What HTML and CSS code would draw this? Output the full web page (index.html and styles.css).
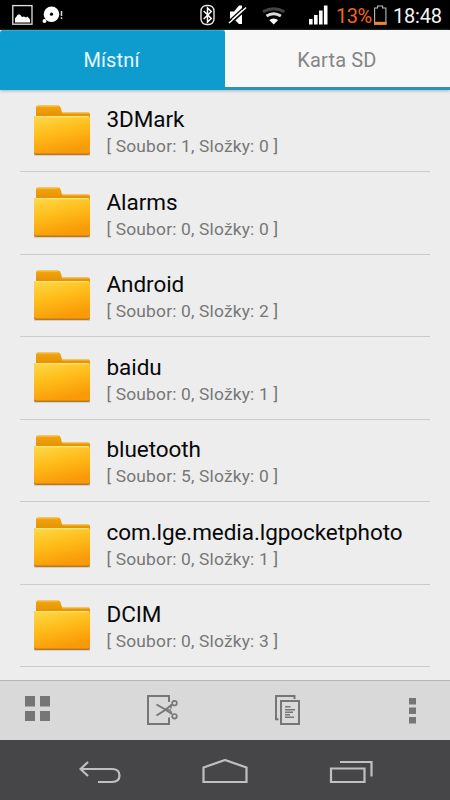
FILE: index.html
```
<!DOCTYPE html>
<html lang="cs">
<head>
<meta charset="utf-8">
<title>Místní</title>
<link rel="stylesheet" href="styles.css">
</head>
<body>
<svg class="defs" width="0" height="0" aria-hidden="true">
  <defs>
    <linearGradient id="front" x1="0" y1="0" x2="0.35" y2="1">
      <stop offset="0" stop-color="#fdd94a"/><stop offset="0.5" stop-color="#ffbd1a"/><stop offset="1" stop-color="#f99b08"/>
    </linearGradient>
    <linearGradient id="back" x1="0" y1="0" x2="0" y2="1">
      <stop offset="0" stop-color="#f3a50d"/><stop offset="1" stop-color="#e59003"/>
    </linearGradient>
    <symbol id="folder" viewBox="0 0 60 54">
      <path d="M2 51h56v2H2z" fill="#000" opacity=".12"/>
      <path d="M4 12V4.500q0-2 2-2H26q2 0 2.600 2l1.400 5h26q2 0 2 2v3H4z" fill="url(#back)"/>
      <path d="M5 3.200H26M30.500 10H57" stroke="#f9c044" stroke-width="1"/>
      <rect x="2" y="13" width="56" height="39" rx="2" fill="#b9791c"/>
      <rect x="2" y="13" width="56" height="37.500" rx="2" fill="url(#front)"/>
      <path d="M3.500 13.700h53" stroke="#ffe47a" stroke-width="1.200"/>
    </symbol>
  </defs>
</svg>
<div class="screen">
  <header class="status">
    <svg class="s-left" width="70" height="30" viewBox="0 0 70 30">
      <rect x="12.800" y="5.600" width="19.200" height="18.600" fill="none" stroke="#e4e4e4" stroke-width="1.300"/>
      <path d="M15 22.500v-4l3-4h2l2 2.500 2-.5 2 1 1.500-1 2.500 3v3z" fill="#fff"/>
      <circle cx="51.500" cy="14.200" r="7.800" fill="#fff"/><circle cx="51.500" cy="14.200" r="1.600" fill="#000"/>
      <circle cx="44.500" cy="21" r="2" fill="#fff"/>
      <path d="M61.500 11v5M61.500 17.200v1.800" stroke="#ddd" stroke-width="1.500"/>
    </svg>
    <svg class="s-right" width="135" height="30" viewBox="195 0 135 30">
      <rect x="201" y="5.500" width="13" height="19" rx="5.500" fill="none" stroke="#e8e8e8" stroke-width="1.400"/>
      <path d="M203.700 11l7.600 7.500-3.800 3.500V8l3.800 3.500-7.600 7.500" fill="none" stroke="#fff" stroke-width="1.500"/>
      <path d="M230 11.500h4l5-6h3V24h-3l-5-5h-4z" fill="#fff"/>
      <path d="M230 24L247 8.500" stroke="#000" stroke-width="1.800"/>
      <path d="M229 23L246 7.500" stroke="#fff" stroke-width="1.600"/>
      <path d="M228 21.800L245 6.300" stroke="#000" stroke-width="1.200"/>
      <g fill="none" stroke-width="3">
        <path d="M263 11.700q10.700-6 21.400 0" stroke="#444"/>
        <path d="M266.500 16q7.200-4.500 14.400 0" stroke="#ddd"/>
      </g>
      <path d="M269.300 20q4.400-3 8.800 0l-4.400 4.500z" fill="#fff"/>
      <path d="M309 19h3.600v5.400H309zM314 15h3.600v9.400H314zM319 10.500h3.600v13.900H319zM323.900 5.500h3.600v18.900h-3.600z" fill="#fff"/>
    </svg>
    <span class="percent">13%</span>
    <svg class="battery" width="14" height="30" viewBox="373 0 14 30">
      <path d="M374.600 24V8h3V6h5v2h3.300v16z" fill="none" stroke="#bbb" stroke-width="1.100"/>
      <path d="M374 21.800h12.500v3H374z" fill="#f58231"/>
    </svg>
    <span class="clock">18:48</span>
  </header>
  <nav class="tabs">
    <div class="tab active"><span>Místní</span></div>
    <div class="tab"><span>Karta SD</span></div>
  </nav>
  <main class="list">
    <div class="row"><svg class="folder"><use href="#folder"/></svg><div class="info"><div class="name">3DMark</div><div class="meta">[ Soubor: 1, Složky: 0 ]</div></div></div>
    <div class="row"><svg class="folder"><use href="#folder"/></svg><div class="info"><div class="name">Alarms</div><div class="meta">[ Soubor: 0, Složky: 0 ]</div></div></div>
    <div class="row"><svg class="folder"><use href="#folder"/></svg><div class="info"><div class="name">Android</div><div class="meta">[ Soubor: 0, Složky: 2 ]</div></div></div>
    <div class="row"><svg class="folder"><use href="#folder"/></svg><div class="info"><div class="name">baidu</div><div class="meta">[ Soubor: 0, Složky: 1 ]</div></div></div>
    <div class="row"><svg class="folder"><use href="#folder"/></svg><div class="info"><div class="name">bluetooth</div><div class="meta">[ Soubor: 5, Složky: 0 ]</div></div></div>
    <div class="row"><svg class="folder"><use href="#folder"/></svg><div class="info"><div class="name">com.lge.media.lgpocketphoto</div><div class="meta">[ Soubor: 0, Složky: 1 ]</div></div></div>
    <div class="row"><svg class="folder"><use href="#folder"/></svg><div class="info"><div class="name">DCIM</div><div class="meta">[ Soubor: 0, Složky: 3 ]</div></div></div>
  </main>
  <div class="toolbar">
    <svg width="26" height="32" viewBox="0 -2 26 32"><path d="M0 0h10v10.500H0zM15 0h10v10.500H15zM0 15h10v10H0zM15 15h10v10H15z" fill="#767676"/></svg>
    <svg class="cut" width="32" height="32" viewBox="147 694 32 32" fill="none" stroke="#767676">
      <path d="M169 702v-6h-21v28h21v-6.500" stroke-width="2"/>
      <path d="M156.500 704.500l8 4.500 7.500 5M156.500 715.500l8-5 7.500-6" stroke-width="2"/>
      <circle cx="174.500" cy="703.200" r="2.300" stroke-width="1.700"/><circle cx="174.500" cy="716.300" r="2.300" stroke-width="1.700"/>
      <path d="M166 710h5M171 704.500v4M171 711v3" stroke-width="1.500"/>
    </svg>
    <svg class="copy" width="26" height="32" viewBox="275 694 26 32" fill="none" stroke="#767676" stroke-width="2">
      <path d="M294.500 699v-3H276v23.300h2.500"/><path d="M281 701h18v23h-18z"/>
      <path d="M285 706.700h5.500M285 709.700h10M285 712.300h8M285 714.800h5M285 717.300h9" stroke-width="1.500"/>
    </svg>
    <svg class="more" width="7" height="32" viewBox="0 -4 7 32"><path d="M0 0h7v6.500H0zM0 9.500h7V16H0zM0 19h7v6.500H0z" fill="#767676"/></svg>
  </div>
  <footer class="navbar">
    <svg width="42" height="26" viewBox="79 759 42 26"><path d="M88 762l-7.500 7 7.500 7M81 769h31q7.500 0 7.500 6.500t-7.500 6.500H98" class="stroke"/></svg>
    <svg width="47" height="26" viewBox="202 759 47 26"><path d="M203.500 782v-14.500l21.500-7.500 21.500 7.500V782z" class="stroke"/></svg>
    <svg width="44" height="26" viewBox="329 759 44 26"><path d="M331 768.500h33.500V782H331zM340 762h31.500v14.500" class="stroke"/></svg>
  </footer>
</div>
</body>
</html>
```
FILE: styles.css
```
* { box-sizing: border-box; }
body { margin: 0; font-family: Roboto, sans-serif; }
svg { display: block; flex: none; }
.defs { position: absolute; }
.screen { width: 450px; height: 800px; display: flex; flex-direction: column; overflow: hidden; background: #ededed; }
.status { height: 30px; flex: none; display: flex; align-items: center; background: #000; line-height: 30px; white-space: nowrap; }
.s-right { margin-left: 125px; }
.percent { width: 37px; margin-left: 6px; padding-top: 2px; font-size: 20px; color: #f0661c; letter-spacing: -0.5px; }
.clock { margin-left: 6px; padding-top: 2px; font-size: 20px; letter-spacing: -0.2px; color: #f4f4f4; }
.tabs { height: 60px; flex: none; display: flex; background: #f7f7f7; box-shadow: 0 1px 3px #9bb9c4; }
.tab { width: 225px; display: flex; justify-content: center; align-items: center; font-size: 20px; letter-spacing: 0.15px; color: #858585; border-bottom: 3px solid #2e91b5; padding: 2px 1px 0 0; }
.tab.active { background: #0e9ccf; border-bottom-color: #0e9ccf; border-top: 1px solid #3aa9cf; border-radius: 3px 2px 0 0; color: #e9f8ff; padding: 1px 2px 0 0; }
.list { height: 590px; flex: none; overflow: hidden; padding: 0 20px; }
.row { height: 82.5px; display: flex; border-bottom: 1px solid #cbcbcb; }
.row:first-child { height: 82px; }
.folder { width: 60px; height: 54px; margin: 13px 0 0 12px; }
.row:first-child .folder { margin-top: 12.5px; }
.info { margin: 15.5px 0 0 14.5px; white-space: nowrap; }
.row:first-child .info { margin-top: 15px; }
.name { font-size: 22.5px; line-height: 28px; letter-spacing: -0.07px; color: #080808; }
.meta { font-size: 17.4px; line-height: 26px; letter-spacing: 0.17px; color: #777; }
.toolbar { height: 60px; flex: none; display: flex; align-items: center; padding: 0 0 1px 25px; background: #d9d9d9; border-top: 1px solid #b4b4b4; }
.cut { margin-left: 96px; }
.copy { margin-left: 96px; }
.more { margin-left: 108px; }
.navbar { height: 60px; flex: none; display: flex; justify-content: space-between; align-items: center; padding: 3px 77px 0 79px; background: #464648; }
.stroke { fill: none; stroke: #c0c0c0; stroke-width: 2.2; }
```
